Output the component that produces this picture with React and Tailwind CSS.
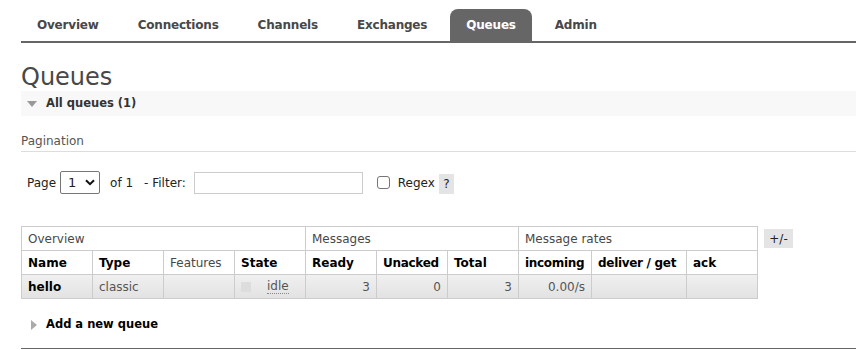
import React from "react";

// Tabs across the top
const tabs = ["Overview", "Connections", "Channels", "Exchanges", "Queues", "Admin"];

function Chevron() {
  return (
    <svg width="10" height="7" viewBox="0 0 10 7" className="ml-[9px]">
      <path d="M1 1.2 L5 5.2 L9 1.2" fill="none" stroke="#111" strokeWidth="2" />
    </svg>
  );
}

export default function App() {
  const th = "border border-[#cccccc] px-[6px] text-left h-[24px] whitespace-nowrap";
  const td = "border border-[#cccccc] px-[6px] h-[24px]";

  return (
    <div className="w-[856px] h-[350px] overflow-hidden bg-white pt-[9px] pl-[21px] font-['DejaVu_Sans',Verdana,sans-serif] text-[12px] text-[#484848]">
      {/* Nav */}
      <div className="flex border-b-2 border-[#666666] h-[34px]">
        {tabs.map((t) => (
          <div
            key={t}
            className={
              t === "Queues"
                ? "h-[32px] px-4 mr-[7px] flex items-center font-bold tracking-[-0.2px] text-white bg-[#666666] rounded-t-[8px]"
                : "h-[32px] px-4 mr-[7px] flex items-center font-bold tracking-[-0.2px] text-[#484848]"
            }
          >
            {t}
          </div>
        ))}
      </div>

      {/* Heading */}
      <h1 className="mt-[20px] text-[24px] leading-[28px] text-[#484848]">Queues</h1>

      {/* All queues bar */}
      <div className="h-[25px] bg-[#f8f8f8] flex items-center pl-[6px]">
        <svg width="10" height="6" viewBox="0 0 10 6" className="mr-[9px]">
          <path d="M0 0 L10 0 L5 6 Z" fill="#999999" />
        </svg>
        <span className="font-bold text-[11.5px] text-[#333333]">All queues (1)</span>
      </div>

      {/* Pagination */}
      <div className="mt-[18px] pb-[2px] border-b border-[#dddddd] text-[#555555] leading-[15px]">
        Pagination
      </div>

      <div className="mt-[19px] flex items-center h-[23px] pl-[6px] text-[#222222]">
        <span>Page</span>
        <div className="ml-[4px] w-[40px] h-[23px] border border-[#767676] rounded-[2px] flex items-center pl-[7px] text-[13px]">
          1
          <Chevron />
        </div>
        <span className="ml-[10px]">of 1</span>
        <span className="ml-[11px]">- Filter:</span>
        <div className="ml-[8px] w-[169px] h-[22px] border border-[#cccccc] bg-white" />
        <div className="ml-[14px] w-[13px] h-[13px] border border-[#767676] rounded-[3px]" />
        <span className="ml-[8px]">Regex</span>
        <span className="ml-[4px] w-[15px] h-[20px] bg-[#e4e4e4] flex items-center justify-center mt-[3px]">?</span>
      </div>

      {/* Table */}
      <div className="mt-[32px] flex items-start">
        <table className="table-fixed w-[736px] border-collapse border border-[#cccccc] text-[12px]">
          <colgroup>
            <col className="w-[71px]" />
            <col className="w-[71px]" />
            <col className="w-[71px]" />
            <col className="w-[71px]" />
            <col className="w-[71px]" />
            <col className="w-[71px]" />
            <col className="w-[71px]" />
            <col className="w-[73px]" />
            <col className="w-[95px]" />
            <col className="w-[71px]" />
          </colgroup>
          <thead>
            <tr>
              <th colSpan={4} className={th + " font-normal text-[#484848]"}>Overview</th>
              <th colSpan={3} className={th + " font-normal text-[#484848]"}>Messages</th>
              <th colSpan={3} className={th + " font-normal text-[#484848]"}>Message rates</th>
            </tr>
            <tr className="text-black">
              <th className={th}>Name</th>
              <th className={th}>Type</th>
              <th className={th + " font-normal text-[#484848]"}>Features</th>
              <th className={th}>State</th>
              <th className={th}>Ready</th>
              <th className={th + " tracking-[-0.3px]"}>Unacked</th>
              <th className={th}>Total</th>
              <th className={th + " tracking-[-0.3px]"}>incoming</th>
              <th className={th + " tracking-[-0.3px]"}>deliver / get</th>
              <th className={th}>ack</th>
            </tr>
          </thead>
          <tbody>
            <tr className="bg-linear-to-b from-[#f0f0f0] to-[#e2e2e2] text-[#555555]">
              <td className={td + " font-bold text-black"}>hello</td>
              <td className={td}>classic</td>
              <td className={td}></td>
              <td className={td}>
                <div className="flex items-center">
                  <span className="w-[10px] h-[10px] bg-[#dddddd]" />
                  <span className="ml-[16px] border-b border-dotted border-[#888888] leading-[13px]">idle</span>
                </div>
              </td>
              <td className={td + " text-right"}>3</td>
              <td className={td + " text-right"}>0</td>
              <td className={td + " text-right"}>3</td>
              <td className={td + " text-right"}>0.00/s</td>
              <td className={td}></td>
              <td className={td}></td>
            </tr>
          </tbody>
        </table>
        <div className="ml-[6px] mt-[3px] w-[29px] h-[19px] bg-[#e4e4e4] flex items-center justify-center text-[#222222]">
          +/-
        </div>
      </div>

      {/* Add a new queue */}
      <div className="mt-[18px] flex items-center pl-[10px] h-[15px]">
        <svg width="6" height="10" viewBox="0 0 6 10" className="mr-[9px]">
          <path d="M0 0 L6 5 L0 10 Z" fill="#aaaaaa" />
        </svg>
        <span className="font-bold text-[11.5px] text-black">Add a new queue</span>
      </div>

      <div className="mt-[16px] border-b border-[#666666]" />
    </div>
  );
}
